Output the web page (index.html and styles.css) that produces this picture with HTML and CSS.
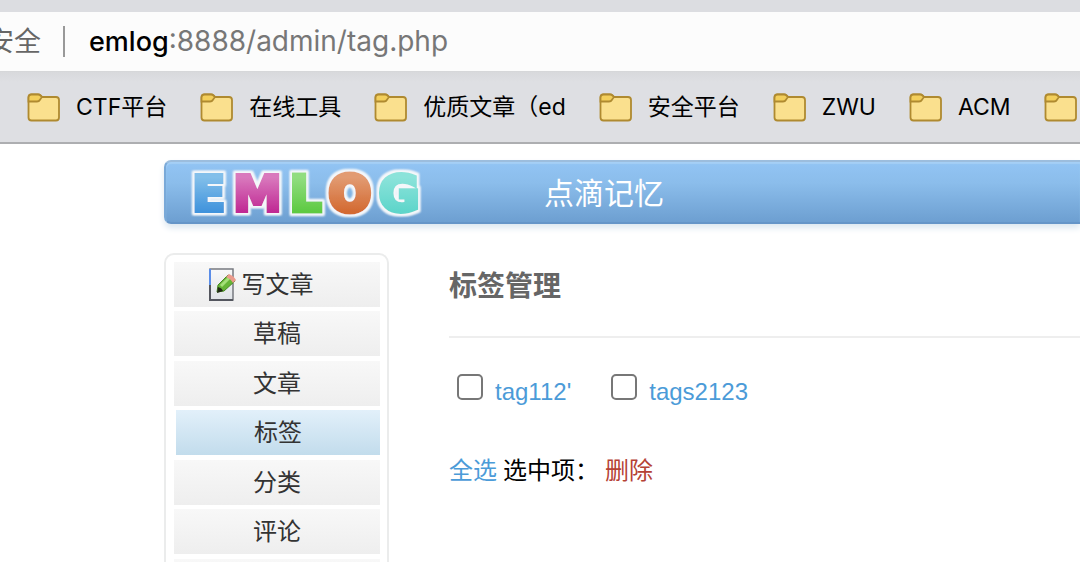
FILE: index.html
```html
<!DOCTYPE html>
<html lang="zh-CN">
<head>
<meta charset="utf-8">
<title>标签管理</title>
<link rel="stylesheet" href="styles.css">
</head>
<body>
<svg class="defs" width="0" height="0" aria-hidden="true">
  <symbol id="folder" viewBox="0 0 33 29">
    <path d="M1.5 8V4.5Q1.5 1.5 4.5 1.5H11Q12.500 1.500 13.500 2.500L15 4H29Q32 4 32 7V24.500Q32 27.500 29 27.500H4.500Q1.500 27.500 1.500 24.500Z" fill="#fae08e" stroke="#af8a30" stroke-width="1.800"/>
    <path d="M1.500 8.500V4.500Q1.500 1.500 4.500 1.500H11Q12.500 1.500 13.500 2.500L15 4Q14 5.200 13 6.700Q12 8.500 10 8.500Z" fill="#f3cf5b" stroke="#af8a30" stroke-width="1.800"/>
  </symbol>
</svg>
<div class="address">
  <span class="security">不安全</span>
  <span class="divider"></span>
  <span class="url"><b>emlog</b>:8888/admin/tag.php</span>
</div>
<nav class="bookmarks">
  <a href="#"><svg class="folder"><use href="#folder"/></svg>CTF平台</a>
  <a href="#"><svg class="folder"><use href="#folder"/></svg>在线工具</a>
  <a href="#"><svg class="folder"><use href="#folder"/></svg>优质文章（ed</a>
  <a href="#"><svg class="folder"><use href="#folder"/></svg>安全平台</a>
  <a href="#"><svg class="folder"><use href="#folder"/></svg>ZWU</a>
  <a href="#"><svg class="folder"><use href="#folder"/></svg>ACM</a>
  <a href="#" aria-label="书签"><svg class="folder"><use href="#folder"/></svg></a>
</nav>
<div class="page">
  <header class="banner">
    <svg class="logo" viewBox="0 0 240 56" role="img" aria-label="EMLOG">
      <defs>
        <filter id="edge" x="-5%" y="-15%" width="110%" height="130%">
          <feMorphology in="SourceAlpha" operator="dilate" radius="2" result="fat"/>
          <feGaussianBlur in="fat" stdDeviation="0.800" result="soft"/>
          <feFlood flood-color="#f4f7fa"/>
          <feComposite in2="soft" operator="in" result="rim"/>
          <feMerge><feMergeNode in="rim"/><feMergeNode in="rim"/><feMergeNode in="SourceGraphic"/></feMerge>
        </filter>
        <linearGradient id="ge" x2="0" y2="1"><stop offset=".2" stop-color="#82bfea"/><stop offset=".8" stop-color="#4093dc"/></linearGradient>
        <linearGradient id="gm" x2="0" y2="1"><stop offset=".2" stop-color="#d979bd"/><stop offset=".8" stop-color="#c02a94"/></linearGradient>
        <linearGradient id="gl" x2="0" y2="1"><stop offset=".2" stop-color="#91dd80"/><stop offset=".8" stop-color="#5eca43"/></linearGradient>
        <linearGradient id="go" x2="0" y2="1"><stop offset=".2" stop-color="#e29b72"/><stop offset=".8" stop-color="#d36a32"/></linearGradient>
        <linearGradient id="gg" x2="0" y2="1"><stop offset=".2" stop-color="#8be3da"/><stop offset=".8" stop-color="#5ed5ca"/></linearGradient>
      </defs>
      <g class="letters" filter="url(#edge)">
        <text x="5" y="47" stroke-width="4" fill="url(#ge)" stroke="url(#ge)">E</text>
        <text x="46" y="47" stroke-width="4" fill="url(#gm)" stroke="url(#gm)">M</text>
        <text x="103" y="47" stroke-width="5" fill="url(#gl)" stroke="url(#gl)">L</text>
        <text x="142" y="47" stroke-width="6" fill="url(#go)" stroke="url(#go)">O</text>
        <text x="192" y="47" stroke-width="5" fill="url(#gg)" stroke="url(#gg)">G</text>
      </g>
    </svg>
    <a class="blog-name" href="#">点滴记忆</a>
  </header>
  <div class="columns">
    <nav class="sidebar">
      <ul>
        <li><a href="#"><svg class="write" viewBox="0 0 27 33">
          <defs><linearGradient id="paper" x2="0" y2="1"><stop stop-color="#f8f9fa"/><stop offset="1" stop-color="#dfe2e6"/></linearGradient></defs>
          <path d="M1 1H24V32H1Z" fill="url(#paper)" stroke="#777a80" stroke-width="1.500"/>
          <path d="M1 1V17" stroke="#5a8de8" stroke-width="2"/><path d="M1 17V32H24" fill="none" stroke="#53565e" stroke-width="2"/>
          <path d="M8 24L9 17L19 7Q24 8 26 13L15 23Z" fill="#66b536" stroke="#478923"/>
          <path d="M12 18L20 10" stroke="#a4df78" stroke-width="3"/>
          <path d="M17 9L20 6Q25 8 27 12L24 15Q22 11 17 9Z" fill="#eb9b8d"/>
          <path d="M8 25L9 19Q13 20 14 23Z" fill="#222a16"/>
        </svg>写文章</a></li>
        <li><a href="#">草稿</a></li>
        <li><a href="#">文章</a></li>
        <li><a class="active" href="#">标签</a></li>
        <li><a href="#">分类</a></li>
        <li><a href="#">评论</a></li>
        <li></li>
      </ul>
    </nav>
    <main class="content">
      <h1>标签管理</h1>
      <form>
        <div class="tags">
          <div class="tag"><input type="checkbox" id="tag-1" aria-label="tag112'"><a href="#">tag112'</a></div>
          <div class="tag"><input type="checkbox" id="tag-2" aria-label="tags2123"><a href="#">tags2123</a></div>
        </div>
        <div class="actions"><a href="#">全选</a> 选中项： <a class="delete" href="#">删除</a></div>
      </form>
    </main>
  </div>
</div>
</body>
</html>
```
FILE: styles.css
```css
* { box-sizing: border-box; }
body {
  margin: 0;
  height: 100vh;
  overflow: hidden;
  background: #fff;
  color: #000;
  font: 24px/32px "Liberation Sans", "Noto Sans CJK SC", sans-serif;
}
a { color: #4b9bd8; text-decoration: none; }
.defs { position: absolute; }

.address {
  display: flex;
  align-items: center;
  height: 72px;
  border-top: 12px solid #dcdde1;
  border-bottom: 1px solid #d6d7d9;
  background: #fcfcfc;
  font: 28px/40px Inter, "Noto Sans CJK SC", sans-serif;
  color: #777;
  white-space: nowrap;
}
.security { width: 41px; display: flex; justify-content: flex-end; font-size: 27px; color: #666; }
.divider { width: 2px; height: 31px; margin: 0 24px 0 22px; background: #999; }
.url b { font-size: 27px; font-weight: 500; color: #000; }

.bookmarks {
  display: flex;
  align-items: center;
  gap: 33px;
  height: 72px;
  padding-left: 27px;
  overflow: hidden;
  border-bottom: 2px solid #adaeb1;
  background: linear-gradient(#d8d9dc, #dedfe3 10px);
  font: 23px/32px Inter, "Noto Sans CJK SC", sans-serif;
  white-space: nowrap;
}
.bookmarks a { display: flex; align-items: center; gap: 16px; flex: none; color: #000; }
.folder { width: 33px; height: 29px; }

.page { padding: 16px 0 0 164px; }
.banner {
  display: flex;
  align-items: center;
  height: 64px;
  padding-left: 21px;
  border: solid #79a9d8;
  border-width: 2px 0 2px 2px;
  border-top-color: #9cbddd;
  border-bottom-color: #6595c8;
  border-radius: 7px 0 0 7px;
  background: linear-gradient(#92c4f4, #8bbdeb 35%, #6d9fd1);
  box-shadow: 0 4px 6px #dce7f0, inset 0 2px 1px #a5cff5;
}
.logo { width: 240px; height: 56px; }
.letters { font: bold 49px "DejaVu Sans", sans-serif; }
.blog-name { margin-left: 117px; padding-top: 3px; font-size: 30px; line-height: 40px; color: #fff; }

.columns { display: flex; align-items: flex-start; gap: 60px; margin-top: 29px; }
.sidebar {
  flex: none;
  width: 225px;
  padding: 7px 7px 7px 8px;
  border: 2px solid #ebecec;
  border-radius: 10px;
}
.sidebar ul { margin: 0; padding: 0; list-style: none; }
.sidebar li { height: 45px; margin-bottom: 5px; background: linear-gradient(#f8f8f8, #eee); }
.sidebar li:nth-child(odd) { margin-bottom: 4px; }
.sidebar a {
  display: flex;
  align-items: center;
  justify-content: center;
  gap: 6px;
  height: 100%;
  color: #333;
}
.sidebar .active { border-left: 2px solid #fff; background: linear-gradient(#e2f0fa, #c2dcec); }
.write { width: 27px; height: 33px; }
.sidebar li:first-child a { padding-right: 32px; }

.content { flex: 1; }
h1 {
  margin: 0;
  padding: 14px 0 29px;
  border-bottom: 2px solid #eee;
  font-size: 28px;
  line-height: 40px;
  color: #666;
}
.tags { display: flex; gap: 40px; padding: 36px 0 0 8px; }
.tag { display: flex; align-items: flex-start; gap: 12px; }
.tag a { padding-top: 2px; }
.tag input {
  appearance: none;
  width: 26px;
  height: 26px;
  margin: 0;
  border: 2px solid #777;
  border-radius: 5px;
  background: #fff;
}
.actions { display: flex; gap: 6px; margin-top: 47px; }
.actions .delete { color: #b54235; }
```
